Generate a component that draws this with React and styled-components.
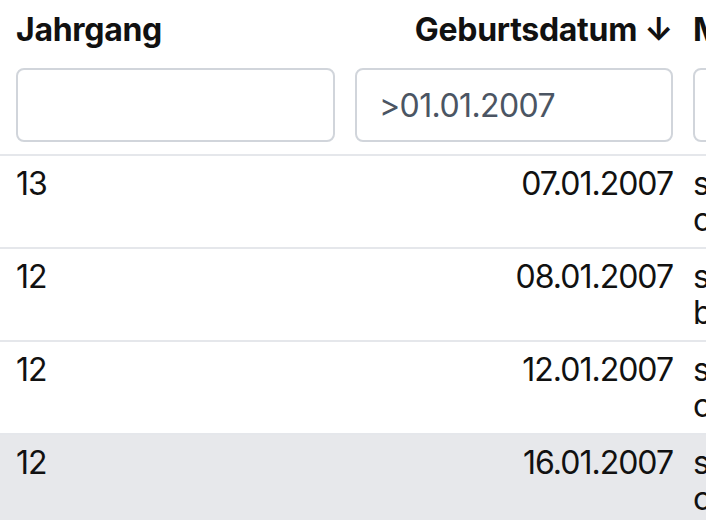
import React from "react";
import styled, { createGlobalStyle } from "styled-components";

const Global = createGlobalStyle`
  html, body { margin: 0; padding: 0; background: #ffffff; overflow: hidden; }
  body { font-family: Inter, "Noto Sans", "Liberation Sans", sans-serif; color: #111111; }
`;

const Table = styled.table`
  border-collapse: collapse;
  width: 1100px;
  table-layout: fixed;
  font-size: 32px;
  line-height: 36px;
`;

const HeadCell = styled.th`
  box-sizing: border-box;
  width: ${(p) => p.$w}px;
  padding: 12px 10px 12px ${(p) => (p.$first ? 16 : 10)}px;
  border-bottom: 2px solid #e5e7eb;
  text-align: ${(p) => (p.$right ? "right" : "left")};
  vertical-align: top;
  font-weight: 700;
  white-space: nowrap;
  letter-spacing: -0.3px;
`;

const Title = styled.div`
  height: 36px;
  margin-bottom: 20px;
`;

const Filter = styled.input`
  display: block;
  box-sizing: border-box;
  width: 100%;
  height: 74px;
  border: 2px solid #d1d5db;
  border-radius: 8px;
  padding: 0 22px;
  font-family: inherit;
  font-size: 32px;
  letter-spacing: -0.6px;
  color: #4b5563;
  background: #ffffff;
  outline: none;
`;

const Row = styled.tr`
  background: ${(p) => (p.$active ? "#e7e8eb" : "#ffffff")};
`;

const Cell = styled.td`
  padding: 10px 10px 9px ${(p) => (p.$first ? 16 : 10)}px;
  border-bottom: 2px solid #e5e7eb;
  text-align: ${(p) => (p.$right ? "right" : "left")};
  vertical-align: top;
  font-weight: 400;
  white-space: nowrap;
  letter-spacing: -1px;
`;

const rows = [
  { year: "13", date: "07.01.2007", mail: "schueler.anna", mail2: "carl-schurz.de" },
  { year: "12", date: "08.01.2007", mail: "schueler.ben", mail2: "bertha-schule.de" },
  { year: "12", date: "12.01.2007", mail: "schueler.clara", mail2: "carl-schurz.de" },
  { year: "12", date: "16.01.2007", mail: "schueler.david", mail2: "carl-schurz.de" },
];

export default function App() {
  return (
    <>
      <Global />
      <Table>
        <thead>
          <tr>
            <HeadCell $first $w={345}>
              <Title>Jahrgang</Title>
              <Filter defaultValue="" />
            </HeadCell>
            <HeadCell $right $w={338}>
              <Title>Geburtsdatum ↓</Title>
              <Filter defaultValue=">01.01.2007" />
            </HeadCell>
            <HeadCell $w={417}>
              <Title>Mail</Title>
              <Filter defaultValue="" />
            </HeadCell>
          </tr>
        </thead>
        <tbody>
          {rows.map((r, i) => (
            <Row key={i} $active={i === 3}>
              <Cell $first>{r.year}</Cell>
              <Cell $right>{r.date}</Cell>
              <Cell>
                {r.mail}
                <br />
                {r.mail2}
              </Cell>
            </Row>
          ))}
        </tbody>
      </Table>
    </>
  );
}
